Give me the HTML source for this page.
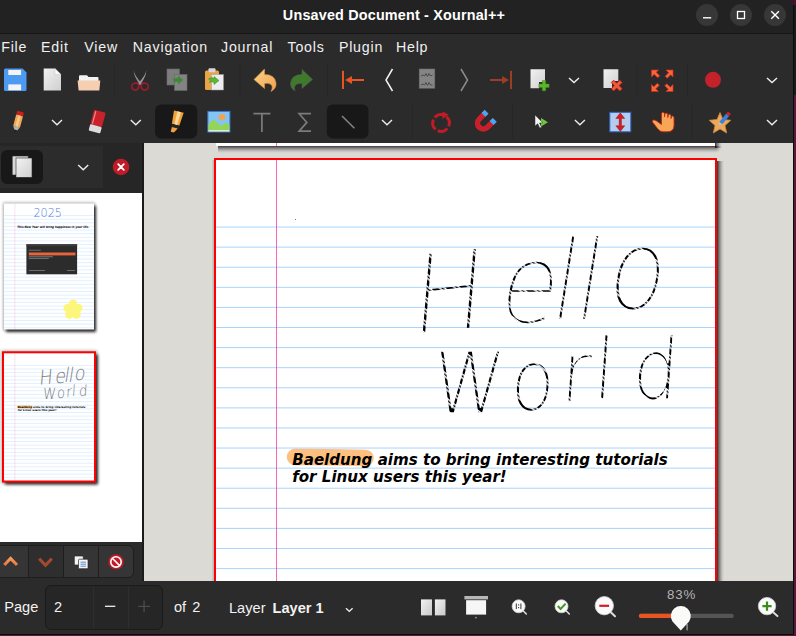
<!DOCTYPE html>
<html><head><meta charset="utf-8"><title>Unsaved Document - Xournal++</title>
<style>
*{box-sizing:border-box;margin:0;padding:0}
html,body{width:796px;height:636px;overflow:hidden;background:#541a38}
body{position:relative;font-family:"Liberation Sans","DejaVu Sans",sans-serif;font-size:14.67px;color:#f2f2f2}
.abs{position:absolute}
#win{position:absolute;left:0;top:0;width:793px;height:634px;background:#2b2b2b;overflow:hidden;border-top-right-radius:7px}
#title{position:absolute;left:0;top:0;width:794px;height:34px;background:#222222;border-bottom:1px solid #161616}
#title .t{position:absolute;left:0;width:786px;top:7px;text-align:center;font-weight:bold;font-size:14.4px;color:#fff;letter-spacing:0.17px;padding-left:2px}
.wb{position:absolute;top:4px;width:22px;height:22px;border-radius:11px;background:#373737}
#menu{position:absolute;left:0;top:34px;width:794px;height:26px;background:#2b2b2b}
#menu span{position:absolute;top:5px;font-size:14.2px;letter-spacing:0.8px;color:#f0f0f0}
#tb1{position:absolute;left:0;top:60px;width:794px;height:41px}
#tb2{position:absolute;left:0;top:101px;width:794px;height:42px}
#side{position:absolute;left:0;top:143px;width:142px;height:438px;background:#fff;overflow:hidden}
#sidehead{position:absolute;left:0;top:0;width:143px;height:49.5px;background:#262626}
#sidebot{position:absolute;left:0;top:399.3px;width:143px;height:39px;background:#2b2b2b}
#divider{position:absolute;left:142px;top:143px;width:2px;height:438px;background:#1b1b1b}
#canvas{position:absolute;left:144px;top:143px;width:649px;height:438px;background:#dcdad5;overflow:hidden}
#status{position:absolute;left:0;top:581px;width:794px;height:53px;background:#2b2b2b}
</style></head><body>
<div class="abs" style="left:0;top:0;width:796px;height:95px;background:#1b1b1b"></div><div class="abs" style="left:0;top:0;width:794px;height:635px;background:#0c0c0c"></div>
<div class="abs" style="left:788px;top:0;width:8px;height:5px;background:#4a1832;opacity:0.8"></div>
<div id="win">
<div id="title"><div class="t">Unsaved Document - Xournal++</div>
<div class="wb" style="left:696px"></div><div class="wb" style="left:730px"></div><div class="wb" style="left:764px"></div>
<svg class="abs" style="left:690px;top:0" width="103" height="33" viewBox="690 0 103 33"><path d="M703,17.800 H711.200" stroke="#fff" stroke-width="1.400"/><rect x="737.500" y="11.500" width="7" height="7" fill="none" stroke="#fff" stroke-width="1.300"/><path d="M771.300,11.200 L778.900,18.800 M778.900,11.200 L771.300,18.800" stroke="#fff" stroke-width="1.400"/></svg>
</div>
<div id="menu"><span style="left:1.2px">File</span><span style="left:41px">Edit</span><span style="left:84.3px">View</span><span style="left:132.8px">Navigation</span><span style="left:221px">Journal</span><span style="left:287.500px">Tools</span><span style="left:338.900px">Plugin</span><span style="left:395.900px">Help</span></div>
<!--TB--><svg class="abs" style="left:0;top:60px" width="794" height="83" viewBox="0 60 794 83">
<defs>
<linearGradient id="gdoc" x1="0" y1="0" x2="1" y2="1"><stop offset="0" stop-color="#f2f2f2"/><stop offset="1" stop-color="#cfcfcf"/></linearGradient>
<linearGradient id="gund" x1="0" y1="0" x2="1" y2="1"><stop offset="0" stop-color="#fbd48a"/><stop offset="1" stop-color="#f0a050"/></linearGradient>
<path id="chev" d="M-5,-2.3 L0,2.3 L5,-2.3" fill="none" stroke="#eeeeee" stroke-width="1.4"/>
</defs>
<!-- separators -->
<g fill="#262626">
<rect x="114" y="63" width="1" height="34"/><rect x="239.5" y="63" width="1" height="34"/><rect x="327" y="63" width="1" height="34"/><rect x="636.5" y="63" width="1" height="34"/><rect x="687" y="63" width="1" height="34"/>
<rect x="412" y="105" width="1" height="34"/><rect x="512" y="105" width="1" height="34"/><rect x="691.5" y="105" width="1" height="34"/>
</g>
<!-- save -->
<path d="M5.5,68.5 H22.5 L26.5,72.5 V89.5 Q26.5,91 25,91 H5.5 Q4,91 4,89.5 V70 Q4,68.5 5.5,68.5Z" fill="#4d9af2"/>
<rect x="8.3" y="70" width="12.8" height="5" fill="#f4f4f4"/><rect x="8.3" y="84.4" width="12.8" height="5.8" fill="#f4f4f4"/>
<!-- new doc -->
<path d="M43.7,68.5 H55 L61,74.5 V90.4 H43.7Z" fill="url(#gdoc)"/><path d="M55,68.5 V74.5 H61Z" fill="#fafafa" stroke="#bdbdbd" stroke-width="0.4"/>
<!-- folder -->
<path d="M79,76.3 Q79,75.3 80,75.3 H87 L88.5,77 H97.5 Q98.5,77 98.5,78 V81 H79Z" fill="#f2f2f2"/>
<path d="M77.6,80.6 H100.3 L99.3,90.4 H78.6Z" fill="#f6ceb2"/>
<!-- scissors -->
<path d="M133.600,70.300 Q134.500,76 142.300,83.800 L140.200,85 Q133.800,77 133.600,70.300Z" fill="#8e8e8e"/>
<path d="M146.400,70.300 Q145.500,76 137.700,83.800 L139.800,85 Q146.200,77 146.400,70.300Z" fill="#9c9c9c"/>
<path d="M136,83 q-4.300,0.200 -4.300,3.800 q0.300,3.300 3.600,3.300 q3.300,-0.300 3.600,-4 q-0.300,-3 -2.900,-3.100Z" fill="#2b2b2b" stroke="#a01b2e" stroke-width="1.600"/>
<path d="M144,83 q4.300,0.200 4.300,3.800 q-0.300,3.300 -3.600,3.300 q-3.300,-0.300 -3.600,-4 q0.300,-3 2.900,-3.100Z" fill="#2b2b2b" stroke="#a01b2e" stroke-width="1.600"/>
<!-- copy (disabled) -->
<rect x="167" y="69" width="12.500" height="16" fill="#7d7d7d" stroke="#6a6a6a" stroke-width="0.600"/>
<rect x="174.500" y="74.500" width="12.500" height="16" fill="#838383" stroke="#6a6a6a" stroke-width="0.600"/>
<path d="M172.500,79.500 q2.500,-2.600 5.500,-1.500 v-2.500 l5.200,4.500 -5.200,4.500 v-2.500 q-3,-0.800 -5,1.500 q1.500,-2 -0.500,-4Z" fill="#3f8a3a"/>
<!-- paste -->
<rect x="205" y="70.500" width="14" height="19.500" rx="1.500" fill="#e9a348"/>
<rect x="208.500" y="68.300" width="7" height="4" rx="1" fill="#d8d8d8"/>
<rect x="211.500" y="74.500" width="12" height="15.500" fill="#ececec" stroke="#9a9a9a" stroke-width="0.500"/>
<path d="M208.500,79 Q212,76.500 214,78.500 L214,76.500 L219,80.500 L214,84.500 L214,82.500 Q212,81 209.500,82.500 Q211.500,80.500 208.500,79Z" fill="#5db534" stroke="#3a8a1c" stroke-width="0.500"/>
<!-- undo -->
<path d="M254,79.500 L264.500,69 L264.500,74.500 Q275,74.500 276,83 Q276.500,88.500 271,91.500 Q273.500,86.500 271,84.500 Q268.500,82.500 264.500,83.500 L264.500,88.500Z" fill="url(#gund)" stroke="#e8963c" stroke-width="0.600"/>
<!-- redo -->
<path d="M312.500,79.500 L302,69.500 L302,74.500 Q291.500,74.500 290.500,83 Q290,88 295,91 Q293.500,86.500 296,84.500 Q298.500,83 302,83.500 L302,88.500Z" fill="#3f7a2c" stroke="#5a5a5a" stroke-width="0.500"/>
<!-- first page -->
<rect x="342" y="70.800" width="2" height="18.200" fill="#e95420"/><rect x="348" y="79" width="16" height="2" fill="#e95420"/><path d="M345,80 L352,76 V84Z" fill="#e95420"/>
<!-- prev -->
<path d="M392.500,69 L386,80 L392.500,91" fill="none" stroke="#f2f2f2" stroke-width="1.500"/>
<!-- recent doc (disabled) -->
<rect x="419.200" y="69" width="15.600" height="19.200" fill="#858585" stroke="#6e6e6e" stroke-width="0.600"/>
<path d="M421,76 l2,-1 1.500,1 1.500,-2.500 1.500,3 1.500,-3 1.500,2.500 2,-1 M421,85 l2,-1 1.500,1 1.500,-2.500 1.500,3 1.500,-3 1.500,2.500 2,0" fill="none" stroke="#4a4a4a" stroke-width="1"/>
<!-- next (disabled) -->
<path d="M461,69 L467.500,80 L461,91" fill="none" stroke="#8b8b8b" stroke-width="1.500"/>
<!-- last page (disabled) -->
<rect x="510" y="70.800" width="2" height="18.200" fill="#9b3e22"/><rect x="490" y="79" width="16" height="2" fill="#9b3e22"/><path d="M509,80 L502,76 V84Z" fill="#9b3e22"/>
<!-- add page -->
<path d="M530.500,69.300 H545 V82 H539 V88.200 H530.500Z" fill="url(#gdoc)"/>
<path d="M542.300,80.600 h3.400 v3.400 h3.400 v3.400 h-3.400 v3.400 h-3.400 v-3.400 h-3.400 v-3.400 h3.400Z" fill="#5db52e" stroke="#3c8a1a" stroke-width="0.500"/>
<use href="#chev" x="574" y="80.200"/>
<!-- delete page -->
<path d="M603.500,69.300 H618.300 V81 H612 V88 H603.500Z" fill="url(#gdoc)"/>
<g transform="translate(616.700 85.600) rotate(45)"><path d="M-1.700,-6 h3.400 v4.300 h4.300 v3.400 h-4.300 v4.300 h-3.400 v-4.300 h-4.300 v-3.400 h4.300Z" fill="#f05a3c" stroke="#c01c14" stroke-width="0.700"/></g>
<!-- fullscreen -->
<g fill="#f4683c" stroke="#e02818" stroke-width="0.700">
<path d="M651.500,70 h7 l-2.300,2.300 3.500,3.500 -2,2 -3.500,-3.500 -2.700,2.700Z"/>
<path d="M673,70 v7 l-2.300,-2.300 -3.500,3.500 -2,-2 3.500,-3.500 -2.700,-2.700Z"/>
<path d="M651.500,91.500 v-7 l2.300,2.300 3.500,-3.500 2,2 -3.500,3.500 2.700,2.700Z"/>
<path d="M673,91.500 h-7 l2.300,-2.300 -3.500,-3.500 2,-2 3.500,3.500 2.700,-2.700Z"/>
</g>
<!-- record -->
<circle cx="713" cy="79.800" r="8" fill="#c3222b"/>
<use href="#chev" x="772" y="80.200"/>

<!-- row 2 -->
<!-- pen -->
<g transform="translate(17.900 121.800) rotate(15)">
<rect x="-3.500" y="-10.500" width="7" height="4" rx="1" fill="#c8201c"/>
<rect x="-3.500" y="-6.500" width="7" height="11.500" fill="#f0a858"/>
<rect x="-1.200" y="-6.500" width="2.400" height="11.500" fill="#f8c888"/>
<path d="M-3.500,5 H3.500 L1.500,8.500 H-1.500Z" fill="#b0b0b0"/><path d="M-1.500,8.500 H1.500 L0,11Z" fill="#222"/>
</g>
<use href="#chev" x="57" y="122.400"/>
<!-- eraser -->
<g transform="translate(97.100 121.800) rotate(15)">
<rect x="-6" y="-11" width="12" height="15" rx="1.200" fill="#c9222b"/>
<rect x="-4.600" y="-10" width="1.200" height="13" fill="#f08a90"/>
<rect x="-6" y="4" width="12" height="6.500" rx="1" fill="#dcdcdc"/>
</g>
<use href="#chev" x="135.800" y="122.400"/>
<!-- highlighter selected -->
<rect x="155" y="104.500" width="42.200" height="34" rx="6" fill="#181818"/>
<g transform="translate(176.300 121.800) rotate(14)">
<path d="M-5,-10.500 H5 L3.800,3 H-3.800Z" fill="#f0a23c"/><path d="M-1.500,-10.500 H2.200 L1.600,3 H-1.200Z" fill="#fcd795"/>
<rect x="-3.800" y="3" width="7.600" height="3.200" fill="#23232b"/>
<path d="M-3,6.200 H3 L0.300,11 H-3Z" fill="#f0a040"/>
</g>
<!-- image -->
<rect x="207.900" y="111.400" width="22" height="20.600" fill="#82c4f4" stroke="#3a78d4" stroke-width="1"/>
<circle cx="222" cy="117.300" r="3.300" fill="#f0a352"/>
<path d="M208.400,124 L213.500,119.500 L221.500,126 L225.500,122.500 L229.400,124.500 V130 H208.400Z" fill="#94d558"/>
<rect x="208.400" y="130" width="21" height="1.500" fill="#e8e8c8"/>
<!-- T -->
<path d="M253.400,113.700 H270.400 M261.900,113.700 V132" fill="none" stroke="#7c7c7c" stroke-width="1.700"/>
<!-- sigma -->
<path d="M311,113.700 H299.200 L306.800,122.400 L299.200,131.200 H311" fill="none" stroke="#7c7c7c" stroke-width="1.700" stroke-linejoin="miter"/>
<!-- line selected -->
<rect x="326.800" y="104.500" width="41.700" height="34" rx="6" fill="#181818"/>
<path d="M342,116 L354.400,128.300" stroke="#858585" stroke-width="1.500" fill="none"/>
<use href="#chev" x="387" y="122.400"/>
<!-- rotate snapping -->
<circle cx="441" cy="123" r="8.300" fill="none" stroke="#c01c26" stroke-width="3" stroke-dasharray="10.500 2.500" transform="rotate(-50 441 123)"/>
<path d="M442.500,111.500 L448.500,114.500 L442.500,119Z" fill="#c01c26"/>
<!-- magnet -->
<g transform="translate(484 122.500) rotate(45)">
<path d="M-8.500,-9 V1 A8.500,8.500 0 0 0 8.500,1 V-9 H3 V1 A3,3 0 0 1 -3,1 V-9Z" fill="#c8202a"/>
<rect x="-8.500" y="-9.500" width="5.500" height="4.500" fill="#4aa6f4"/><rect x="3" y="-9.500" width="5.500" height="4.500" fill="#4aa6f4"/>
</g>
<!-- cursor play -->
<path d="M541,118 L548,122.300 L541,126.500Z" fill="#6fc83c"/>
<path d="M535,115 L535,126 L537.700,123.700 L539.800,128 L541.500,127.200 L539.500,123 L542.800,122.800Z" fill="#f4f4f4" stroke="#333" stroke-width="0.500"/>
<use href="#chev" x="579.900" y="122.400"/>
<!-- vertical space -->
<rect x="609.800" y="112.300" width="21" height="19.500" fill="#b4cdee" stroke="#2f62c4" stroke-width="1"/>
<path d="M620.300,112.800 L624.800,118.500 H621.500 V125.700 H624.800 L620.300,131.400 L615.800,125.700 H619.100 V118.500 H615.800Z" fill="#cc1f24" stroke="#a01010" stroke-width="0.400"/>
<!-- hand -->
<path d="M661.500,114 Q661.500,112.200 663,112.200 Q664.500,112.200 664.500,114 V117 Q664.500,113 666,113 Q667.800,113 667.800,115 V117.500 Q668,114.200 669.500,114.200 Q671,114.200 671,116 V118.500 Q671.200,116 672.500,116 Q674,116 674,118 V125.500 Q674,131.800 667,131.800 H663 Q660,131.800 657.500,128.500 L652.500,122 Q652,120.500 653.500,120 Q655,119.800 656.500,121 L661.500,124.500Z" fill="#f7a657" stroke="#c42a10" stroke-width="0.900"/>
<!-- star pen -->
<path d="M720,112.500 L723,119.500 L730.800,120.300 L725,125.500 L726.700,133 L720,129 L713.300,133 L715,125.500 L709.200,120.300 L717,119.500Z" fill="#eda85a" stroke="#c8853a" stroke-width="0.800" stroke-linejoin="round"/>
<g transform="translate(724 119.300) rotate(40)">
<rect x="-1.900" y="-8.500" width="3.800" height="3" fill="#d62020"/>
<rect x="-1.900" y="-5.500" width="3.800" height="10.500" fill="#3b7fe0"/>
<path d="M-1.900,5 H1.900 L0,8.500Z" fill="#c0c0c0"/>
</g>
<use href="#chev" x="772" y="122.400"/>
</svg>
<!--/TB-->
<div id="side"><div id="sidehead"><div class="abs" style="left:0;top:3px;width:103px;height:42px;background:#2c2c2c"></div>
<div class="abs" style="left:1px;top:7px;width:42px;height:34px;border-radius:6px;background:#181818"></div>
<svg class="abs" style="left:0;top:0" width="143" height="48" viewBox="0 143 143 48">
<defs><linearGradient id="gd2" x1="0" y1="0" x2="1" y2="1"><stop offset="0" stop-color="#f4f4f4"/><stop offset="1" stop-color="#cfcfcf"/></linearGradient></defs>
<rect x="12.200" y="156" width="16" height="19" fill="#d9d9d9" stroke="#2a2a2a" stroke-width="0.6"/>
<rect x="16" y="158" width="16" height="19.300" fill="url(#gd2)" stroke="#2a2a2a" stroke-width="0.6"/>
<path d="M78.200,165 L83.200,169.800 L88.200,165" fill="none" stroke="#eee" stroke-width="1.400"/>
<circle cx="121" cy="167" r="8.300" fill="#c01c28"/>
<path d="M118.200,164.200 L123.800,169.800 M123.800,164.200 L118.200,169.800" stroke="#fff" stroke-width="1.800" stroke-linecap="round"/>
</svg></div>
<!--THUMBS--><svg class="abs" style="left:0;top:49.5px" width="142" height="350" viewBox="0 192.500 142 350">
<defs><filter id="sh2" x="-10%" y="-10%" width="125%" height="125%"><feGaussianBlur stdDeviation="1.500"/></filter>
<clipPath id="c2"><rect x="216" y="160" width="499" height="706"/></clipPath></defs>
<!-- thumb 1 -->
<rect x="3" y="202" width="92" height="128" fill="#000" opacity="0.3" filter="url(#sh2)"/><rect x="6" y="205.500" width="90" height="126" fill="#000" opacity="0.800" filter="url(#sh2)"/>
<rect x="4" y="203" width="90" height="126" fill="#fff"/>
<g stroke="#40a0ff" stroke-width="0.350" fill="none" opacity="0.45"><path d="M4,215.10 H94"/><path d="M4,218.72 H94"/><path d="M4,222.34 H94"/><path d="M4,225.96 H94"/><path d="M4,229.57 H94"/><path d="M4,233.19 H94"/><path d="M4,236.81 H94"/><path d="M4,240.43 H94"/><path d="M4,244.05 H94"/><path d="M4,247.66 H94"/><path d="M4,251.28 H94"/><path d="M4,254.90 H94"/><path d="M4,258.52 H94"/><path d="M4,262.14 H94"/><path d="M4,265.75 H94"/><path d="M4,269.37 H94"/><path d="M4,272.99 H94"/><path d="M4,276.61 H94"/><path d="M4,280.23 H94"/><path d="M4,283.84 H94"/><path d="M4,287.46 H94"/><path d="M4,291.08 H94"/><path d="M4,294.70 H94"/><path d="M4,298.32 H94"/><path d="M4,301.94 H94"/><path d="M4,305.55 H94"/><path d="M4,309.17 H94"/><path d="M4,312.79 H94"/><path d="M4,316.41 H94"/><path d="M4,320.03 H94"/><path d="M4,323.64 H94"/><path d="M4,327.26 H94"/></g>
<path d="M14.900,203 V329" stroke="#ff0080" stroke-width="0.300" opacity="0.4"/>
<text x="33.500" y="216.200" font-family="'DejaVu Sans Light','DejaVu Sans',sans-serif" font-weight="200" font-size="12.500" fill="#5b80d8" textLength="28.500" lengthAdjust="spacingAndGlyphs">2025</text>
<text x="17.200" y="227.300" font-family="'DejaVu Sans',sans-serif" font-weight="bold" font-style="oblique" font-size="3.1" fill="#000" textLength="72" lengthAdjust="spacingAndGlyphs">This New Year will bring happiness in your life.</text>
<rect x="26.400" y="243.800" width="50.700" height="30" fill="#2c2c2c"/>
<rect x="28.800" y="252" width="46.700" height="2.900" fill="#e8643a"/>
<rect x="28.800" y="249.300" width="12" height="0.800" fill="#777"/><rect x="28.800" y="256" width="24" height="0.700" fill="#999"/><rect x="28.800" y="257.800" width="20" height="0.700" fill="#888"/>
<rect x="29" y="269.500" width="16" height="0.700" fill="#888"/><rect x="67" y="269.500" width="8" height="0.700" fill="#888"/>
<rect x="26.400" y="243.800" width="50.700" height="2" fill="#3a3a3a"/>
<g fill="#fdf67c"><circle cx="73" cy="303" r="4"/><circle cx="67.500" cy="307.500" r="4"/><circle cx="78.500" cy="307.500" r="4"/><circle cx="69.500" cy="314" r="4.300"/><circle cx="76.500" cy="314" r="4.300"/><circle cx="73" cy="309" r="5"/></g>
<!-- thumb 2 -->
<rect x="1" y="350" width="96" height="133" fill="#000" opacity="0.3" filter="url(#sh2)"/><rect x="5" y="354" width="93" height="130" fill="#000" opacity="0.800" filter="url(#sh2)"/>
<rect x="3" y="351.800" width="92" height="129.200" fill="#fff" stroke="#f00" stroke-width="2"/>
<g transform="translate(4 352.800) scale(0.18036) translate(-216 -160)" clip-path="url(#c2)"><use href="#p2thumb"/></g>
</svg><!--/THUMBS-->
<div id="sidebot">
<div class="abs" style="left:-6px;top:3.2px;width:140px;height:33px;border:1px solid #1e1e1e;border-radius:6px;background:#353535"></div>
<div class="abs" style="left:28px;top:4.2px;width:36px;height:31px;background:#2e2e2e;border-left:1px solid #1e1e1e;border-right:1px solid #1e1e1e"></div>
<div class="abs" style="left:98px;top:4.2px;width:1px;height:31px;background:#1e1e1e"></div>
<svg class="abs" style="left:0;top:0" width="143" height="39" viewBox="0 542.3 143 39"><defs><linearGradient id="gup" gradientUnits="userSpaceOnUse" x1="0" y1="557" x2="0" y2="567"><stop offset="0" stop-color="#f9a565"/><stop offset="1" stop-color="#ec6a33"/></linearGradient></defs>
<path d="M4.300,565.300 L10.600,558.700 L17,565.300" fill="none" stroke="url(#gup)" stroke-width="3.100" stroke-linejoin="miter"/>
<path d="M39.200,558.900 L45.500,565.500 L51.800,558.900" fill="none" stroke="#a14a2e" stroke-width="3.100"/>
<rect x="74.300" y="556.300" width="9" height="9" rx="1" fill="#f4f4f4" stroke="#2a2a2a" stroke-width="0.700"/>
<rect x="78.500" y="559.500" width="9.500" height="9.500" rx="1" fill="#f4f4f4" stroke="#2a2a2a" stroke-width="0.700"/>
<path d="M80.500,562.500 h5.500 M80.500,564.500 h5.500 M80.500,566.500 h5.500" stroke="#4a7fd0" stroke-width="0.900"/>
<circle cx="116" cy="562.200" r="7.700" fill="#c01c28"/>
<circle cx="116" cy="562.200" r="5.200" fill="none" stroke="#fff" stroke-width="1.600"/>
<path d="M112.300,558.500 L119.700,565.900" stroke="#fff" stroke-width="1.600"/>
</svg>
</div></div>
<div id="divider"></div>
<div id="canvas">
<!--CANVAS--><svg class="abs" style="left:0;top:0" width="649" height="438" viewBox="144 143 649 438">
<defs>
<linearGradient id="shv" x1="0" y1="0" x2="0" y2="1"><stop offset="0" stop-color="#000" stop-opacity="0.72"/><stop offset="0.35" stop-color="#000" stop-opacity="0.38"/><stop offset="0.7" stop-color="#000" stop-opacity="0.12"/><stop offset="1" stop-color="#000" stop-opacity="0"/></linearGradient>
<linearGradient id="shh" x1="0" y1="0" x2="1" y2="0"><stop offset="0" stop-color="#000" stop-opacity="0.78"/><stop offset="0.35" stop-color="#000" stop-opacity="0.4"/><stop offset="0.7" stop-color="#000" stop-opacity="0.12"/><stop offset="1" stop-color="#000" stop-opacity="0"/></linearGradient>
<linearGradient id="shl" x1="1" y1="0" x2="0" y2="0"><stop offset="0" stop-color="#000" stop-opacity="0.18"/><stop offset="1" stop-color="#000" stop-opacity="0"/></linearGradient>
<radialGradient id="shc" cx="0" cy="0" r="1"><stop offset="0" stop-color="#000" stop-opacity="0.72"/><stop offset="0.35" stop-color="#000" stop-opacity="0.38"/><stop offset="0.7" stop-color="#000" stop-opacity="0.12"/><stop offset="1" stop-color="#000" stop-opacity="0"/></radialGradient>
<!--HWDEF--><pattern id="gaps" width="9.5" height="9.5" patternUnits="userSpaceOnUse" patternTransform="rotate(38)"><rect x="0" y="0" width="9.5" height="1.5" fill="#000"/><rect x="0" y="3" width="9.5" height="1.500" fill="#000"/></pattern>
<g id="hwt" font-family="'DejaVu Sans Light','DejaVu Sans',sans-serif" font-weight="200"><text id="hw1" transform="translate(419.0 335.0) skewX(-9) scale(0.85 1)" font-size="112" x="-11.0 88.1 147.9 176.1 212.5" y="0.0 -12.0 -15.0 -15.0 -26.0" rotate="-5 0 0 0 0">Hello</text><text id="hw2" transform="translate(433.0 413.0) skewX(-4) scale(0.85 1)" font-size="85" x="-2.5 89.2 147.9 186.2 231.8" y="0.0 -3.0 -11.0 -14.0 -14.0" rotate="0 0 0 0 0">World</text></g>
<mask id="hwm" maskUnits="userSpaceOnUse" x="400" y="200" width="320" height="240"><g fill="#fff" stroke="#000" font-family="'DejaVu Sans Light','DejaVu Sans',sans-serif" font-weight="200"><use href="#hw1" stroke-width="2.7"/><use href="#hw2" stroke-width="1.5"/></g><rect x="400" y="200" width="320" height="240" fill="url(#gaps)"/></mask>
<!--/HWDEF--><g id="p2lines">
<g stroke="#40a0ff" stroke-width="0.46" fill="none"><path d="M216,227.05 H715"/><path d="M216,247.14 H715"/><path d="M216,267.23 H715"/><path d="M216,287.32 H715"/><path d="M216,307.41 H715"/><path d="M216,327.50 H715"/><path d="M216,347.59 H715"/><path d="M216,367.68 H715"/><path d="M216,387.77 H715"/><path d="M216,407.86 H715"/><path d="M216,427.95 H715"/><path d="M216,448.04 H715"/><path d="M216,468.13 H715"/><path d="M216,488.22 H715"/><path d="M216,508.31 H715"/><path d="M216,528.40 H715"/><path d="M216,548.49 H715"/><path d="M216,568.58 H715"/></g>
<path d="M276.5,160 V866" stroke="#ff0080" stroke-width="0.6" fill="none"/>
</g>
<g id="p2ink">
<rect x="295" y="219" width="1" height="1" fill="#4a7ac0"/>
<path d="M295,457 Q330,457 365.500,458" stroke="#ff8000" stroke-opacity="0.5" stroke-width="16.5" stroke-linecap="round" fill="none"/>
<g font-family="'DejaVu Sans',sans-serif" font-weight="bold" font-style="oblique" font-size="15.1" fill="#000">
<text x="292.2" y="465">Baeldung aims to bring interesting tutorials</text>
<text x="292.2" y="482">for Linux users this year!</text>
</g>
</g>
<g id="p2thumb"><g stroke="#40a0ff" stroke-width="1.9" fill="none" opacity="0.45"><path d="M216,227.05 H715"/><path d="M216,247.14 H715"/><path d="M216,267.23 H715"/><path d="M216,287.32 H715"/><path d="M216,307.41 H715"/><path d="M216,327.50 H715"/><path d="M216,347.59 H715"/><path d="M216,367.68 H715"/><path d="M216,387.77 H715"/><path d="M216,407.86 H715"/><path d="M216,427.95 H715"/><path d="M216,448.04 H715"/><path d="M216,468.13 H715"/><path d="M216,488.22 H715"/><path d="M216,508.31 H715"/><path d="M216,528.40 H715"/><path d="M216,548.49 H715"/><path d="M216,568.58 H715"/><path d="M216,588.67 H715"/><path d="M216,608.76 H715"/><path d="M216,628.85 H715"/><path d="M216,648.94 H715"/><path d="M216,669.03 H715"/><path d="M216,689.12 H715"/><path d="M216,709.21 H715"/><path d="M216,729.30 H715"/><path d="M216,749.39 H715"/><path d="M216,769.48 H715"/><path d="M216,789.57 H715"/><path d="M216,809.66 H715"/><path d="M216,829.75 H715"/><path d="M216,849.84 H715"/></g><path d="M276.5,160 V866" stroke="#ff0080" stroke-width="1.700" opacity="0.4"/><g fill="#777" font-family="'DejaVu Sans Light','DejaVu Sans',sans-serif" font-weight="200"><use href="#hw1"/><use href="#hw2"/></g><use href="#p2ink"/></g>
</defs>
<!-- prev page -->
<rect x="218" y="146" width="497" height="7" fill="url(#shv)"/>
<rect x="715" y="143" width="7" height="5" fill="url(#shh)"/>
<path d="M715,146 h7 v7 h-7Z" fill="url(#shc)"/>
<rect x="216" y="140" width="499" height="6" fill="#fff"/>
<path d="M276.500,143 V146" stroke="#ff0080" stroke-width="0.600"/>
<!-- page shadow -->
<rect x="717" y="161" width="7" height="430" fill="url(#shh)"/>
<path d="M717,159 L724,161 V159Z" fill="none"/>
<rect x="211.500" y="160" width="2.500" height="430" fill="url(#shl)"/>
<rect x="215" y="159" width="501" height="440" fill="#fff" stroke="#ff0000" stroke-width="2"/>
<use href="#p2lines"/><g id="hw" mask="url(#hwm)" fill="#000" font-family="'DejaVu Sans Light','DejaVu Sans',sans-serif" font-weight="200"><use href="#hw1"/><use href="#hw2"/></g><use href="#p2ink"/>
</svg><!--/CANVAS-->
</div>
<div id="status">
<span class="abs" style="left:4.200px;top:18px;font-size:14.600px">Page</span>
<div class="abs" style="left:45px;top:4px;width:117.500px;height:45px;border:1px solid #1a1a1a;border-radius:6px;background:#262626"></div>
<div class="abs" style="left:92.500px;top:5px;width:1px;height:43px;background:#2e2e2e"></div>
<div class="abs" style="left:127.500px;top:5px;width:1px;height:43px;background:#2e2e2e"></div>
<span class="abs" style="left:54px;top:18px;font-size:14.600px">2</span>
<span class="abs" style="left:174px;top:18px;font-size:14.600px;word-spacing:2px">of 2</span>
<span class="abs" style="left:229px;top:19px;font-size:14.600px">Layer</span>
<span class="abs" style="left:272.500px;top:19px;font-size:14.600px;font-weight:bold">Layer 1</span>
<span class="abs" style="left:667px;top:6px;font-size:13.300px;letter-spacing:0.9px;color:#b4b4b4">83%</span>
<svg class="abs" style="left:0;top:0" width="794" height="53" viewBox="0 581 794 53">
<defs><linearGradient id="gd3" x1="0" y1="0" x2="1" y2="1"><stop offset="0" stop-color="#f2f2f2"/><stop offset="1" stop-color="#c8c8c8"/></linearGradient></defs>
<path d="M105,606.300 H115.300" stroke="#f0f0f0" stroke-width="1.300"/>
<path d="M138.200,606.300 H150 M144.100,600.400 V612.200" stroke="#4c4c4c" stroke-width="1.300"/>
<path d="M346,608.300 L349.300,611.400 L352.600,608.300" fill="none" stroke="#eee" stroke-width="1.400"/>
<rect x="421" y="599.400" width="11" height="16" fill="url(#gd3)"/><rect x="434.900" y="599.400" width="10.600" height="16" fill="url(#gd3)"/>
<rect x="464.400" y="596" width="23.600" height="3.400" fill="#b8b8b8"/><rect x="466.100" y="600.200" width="20" height="14.400" fill="#f6f6f6"/><circle cx="475.900" cy="617.600" r="0.900" fill="#999"/>
<path d="M523.300,611 L526.300,614" stroke="#ddd" stroke-width="1.600" stroke-linecap="round"/>
<circle cx="518.600" cy="606.300" r="6.500" fill="#fafafa" stroke="#d0d0d0" stroke-width="0.800"/>
<path d="M516.300,603.500 v5.600 M520.900,603.500 v5.600" stroke="#333" stroke-width="1"/><rect x="518.100" y="604.300" width="1" height="1.200" fill="#333"/><rect x="518.100" y="607" width="1" height="1.200" fill="#333"/>
<path d="M566.300,611 L569.300,614" stroke="#ddd" stroke-width="1.600" stroke-linecap="round"/>
<circle cx="561.500" cy="606.300" r="6.500" fill="#fafafa" stroke="#d0d0d0" stroke-width="0.800"/>
<path d="M557.800,606 L560.600,609 L565.600,603.600" fill="none" stroke="#3f9a22" stroke-width="2"/>
<path d="M610.800,612.200 L615,616.200" stroke="#ddd" stroke-width="2" stroke-linecap="round"/>
<circle cx="604.300" cy="605.700" r="9.200" fill="#fafafa" stroke="#d0d0d0" stroke-width="0.800"/>
<rect x="599.300" y="604.700" width="9.800" height="2.200" fill="#d01c28"/>
<rect x="638.800" y="613.800" width="95" height="4.200" rx="2.100" fill="#555"/>
<rect x="638.800" y="613.800" width="44" height="4.200" rx="2.100" fill="#e95420"/>
<rect x="686.500" y="623.800" width="1.200" height="6.600" fill="#aaa"/>
<path d="M680.800,630.600 L672.500,621.500 A10,10 0 1 1 689.100,621.500Z" fill="#fafaf8"/>
<path d="M773.200,612.300 L777.400,616" stroke="#ddd" stroke-width="2" stroke-linecap="round"/>
<circle cx="767" cy="606.100" r="8.700" fill="#fafafa" stroke="#d0d0d0" stroke-width="0.800"/>
<path d="M762.400,606.100 H771.600 M767,601.500 V610.700" stroke="#3a8a1c" stroke-width="2.200"/>
</svg>
</div>
</div>
</body></html>
